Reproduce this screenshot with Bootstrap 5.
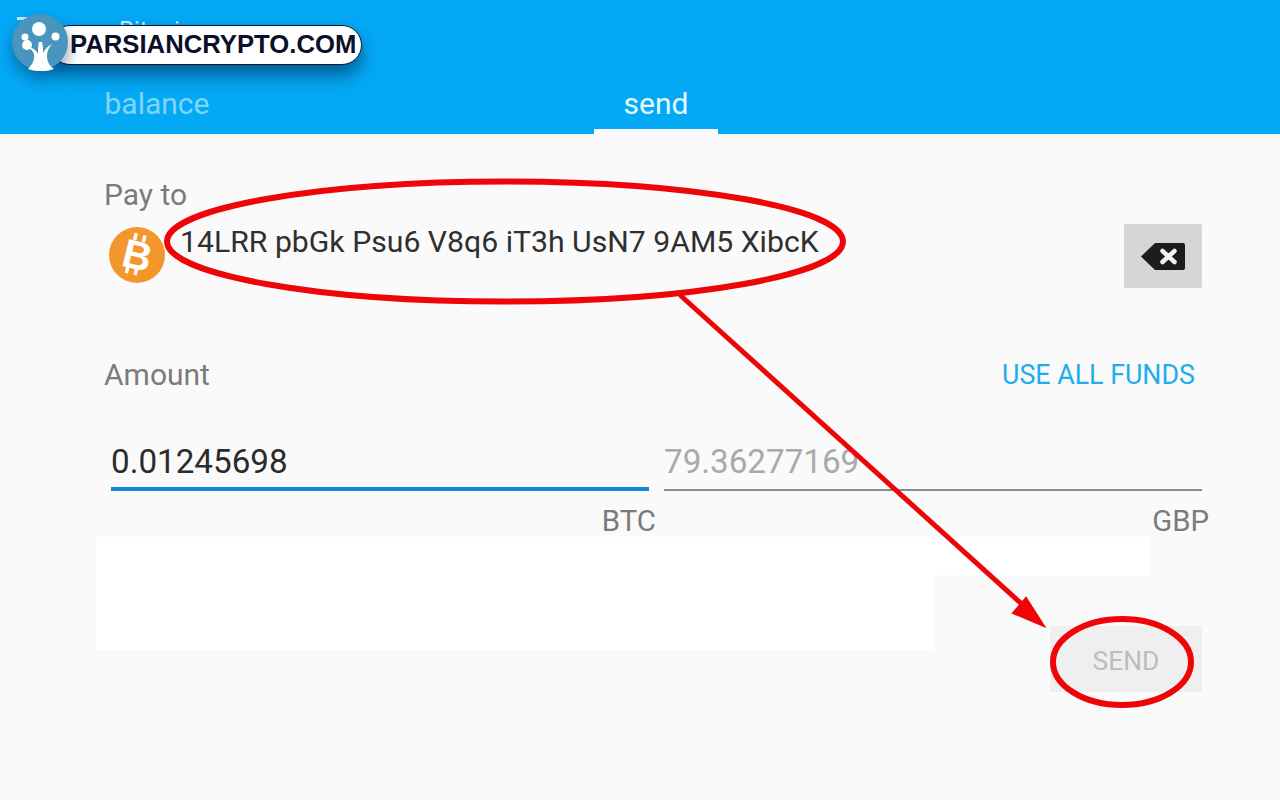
<!DOCTYPE html>
<html lang="en">
<head>
    <meta charset="UTF-8">
    <meta name="viewport" content="width=device-width, initial-scale=1.0">
    <title>Bitcoin send</title>
    <link href="https://cdn.jsdelivr.net/npm/bootstrap@5.3.0/dist/css/bootstrap.min.css" rel="stylesheet">
    <style>
        html, body { height: 100%; overflow: hidden; }
        body { background: #fafafa; font-family: Roboto, sans-serif; position: relative; color: #7b7b7b; }
        .app-head { height: 134px; background: #04a9f5; color: #fff; }
        .top-row { height: 86px; padding: 16px 0 0 17px; gap: 86px; }
        .top-title { font-size: 24px; line-height: 28px; color: #cdeefd; }
        .menu-mark { width: 16px; height: 3px; background: #cdeefd; margin-top: 1px; }
        .tab-row { height: 48px; }
        .tab-item { font-size: 30px; line-height: 36px; height: 48px; text-align: center; color: #80d4fa; width: 124px; }
        .tab-item.first { margin-left: 95px; }
        .tab-item.second { margin-left: 375px; color: #e6f7fe; border-bottom: 5px solid #fafafa; }
        .pay-box { padding: 44px 78px 0 104px; }
        .field-label { font-size: 30px; line-height: 34px; }
        .pay-row { margin-top: 12px; height: 66px; padding-left: 5px; }
        .coin-mark { width: 56px; height: 56px; margin-top: 3px; flex: none; }
        .addr-text { font-size: 30.2px; line-height: 34px; color: #2f2f2f; margin-left: 15px; margin-top: 1px; white-space: nowrap; }
        .erase-btn { width: 78px; height: 64px; background: #d6d6d6; border-radius: 2px; margin-left: auto; }
        .amount-row { margin-top: 68px; }
        .funds-link { font-size: 26.8px; line-height: 34px; color: #20ade9; margin-right: 7px; }
        .inputs-row { margin-top: 45px; padding-left: 7px; gap: 15px; }
        .num-field { height: 54px; font-size: 33.2px; line-height: 50px; }
        .num-field.active { width: 538px; color: #2b2b2b; border-bottom: 4px solid #1488d8; }
        .num-field.idle { width: 538px; color: #a9a9a9; border-bottom: 2px solid #8c8c8c; }
        .unit-row { margin-top: 13px; font-size: 29.4px; line-height: 34px; }
        .unit-a { width: 656px; text-align: right; }
        .unit-b { width: 553px; text-align: right; }
        .send-wrap { padding: 88px 78px 0 0; }
        .send-btn { width: 152px; height: 66px; background: #efefef; color: #bdbdbd; font-size: 26.4px; line-height: 70px; text-align: center; }
        .white-patch { position: absolute; background: #fff; }
        .patch-a { left: 96px; top: 537px; width: 839px; height: 113px; }
        .patch-b { left: 935px; top: 537px; width: 70px; height: 38px; }
        .patch-c { left: 1005px; top: 537px; width: 145px; height: 39px; }
        .mark-layer { position: absolute; left: 0; top: 0; width: 1280px; height: 800px; pointer-events: none; }
        .site-badge { position: absolute; left: 12px; top: 14px; width: 350px; height: 56px; }
        .badge-pill { position: absolute; left: 38px; top: 11px; width: 312px; height: 40px; background: #fff; border: 1.5px solid #10162f; border-radius: 20px; box-shadow: 0 10px 18px rgba(0, 40, 80, .6); font-family: "Liberation Sans", Arial, sans-serif; font-weight: 700; font-size: 25.7px; line-height: 37px; color: #0b0f2a; padding-left: 19px; white-space: nowrap; }
        .badge-round { position: absolute; left: -1px; top: -1px; width: 58px; height: 58px; filter: drop-shadow(0 8px 8px rgba(0, 40, 80, .45)); }
    </style>
</head>
<body>
    <!-- Header -->
    <div class="app-head">
        <div class="top-row d-flex">
            <div>
                <div class="menu-mark"></div>
            </div>
            <div class="top-title">Bitcoin</div>
        </div>
        <div class="tab-row d-flex">
            <div class="tab-item first">balance</div>
            <div class="tab-item second">send</div>
        </div>
    </div>

    <!-- Pay to -->
    <div class="pay-box">
        <div class="field-label">Pay to</div>
        <div class="pay-row d-flex align-items-start">
            <svg class="coin-mark" viewBox="0 0 56 56">
                <circle cx="28" cy="28" r="28" fill="#f3962b"/>
                <g transform="rotate(14 28 28)">
                    <text x="28.500" y="42" text-anchor="middle" font-family="Liberation Sans, sans-serif" font-weight="700" font-size="40" fill="#fff">B</text>
                    <path d="M22 7v7M31 7v7M22 41v7M31 41v7" stroke="#fff" stroke-width="3.500" fill="none"/>
                </g>
            </svg>
            <div class="addr-text">14LRR pbGk Psu6 V8q6 iT3h UsN7 9AM5 XibcK</div>
            <div class="erase-btn d-flex align-items-center justify-content-center">
                <svg width="44" height="29" viewBox="0 0 44 29">
                    <path d="M0 14.500L14 1h28a2 2 0 0 1 2 2v23a2 2 0 0 1-2 2H14z" fill="#1c1c1c"/>
                    <path d="M21.500 9l12 11M33.500 9l-12 11" stroke="#f1f1f1" stroke-width="4.500" stroke-linecap="round"/>
                </svg>
            </div>
        </div>

        <!-- Amount -->
        <div class="amount-row d-flex justify-content-between">
            <div class="field-label">Amount</div>
            <div class="funds-link">USE ALL FUNDS</div>
        </div>
        <div class="inputs-row d-flex">
            <div class="num-field active">0.01245698</div>
            <div class="num-field idle">79.36277169</div>
        </div>
    </div>
    <div class="unit-row d-flex">
        <div class="unit-a">BTC</div>
        <div class="unit-b">GBP</div>
    </div>
    <div class="send-wrap d-flex justify-content-end">
        <div class="send-btn">SEND</div>
    </div>

    <!-- Painted over parts of the screenshot -->
    <div class="white-patch patch-a"></div>
    <div class="white-patch patch-b"></div>
    <div class="white-patch patch-c"></div>

    <!-- Red annotations -->
    <svg class="mark-layer" viewBox="0 0 1280 800">
        <ellipse cx="505" cy="241.500" rx="338" ry="60" fill="none" stroke="#ee0508" stroke-width="6"/>
        <ellipse cx="1122" cy="662" rx="69" ry="43" fill="none" stroke="#ee0508" stroke-width="6"/>
        <path d="M680 295L1024 606" stroke="#ee0508" stroke-width="5"/>
        <path d="M1044 626L1013 613L1026 598Z" fill="#ee0508" stroke="#ee0508" stroke-width="2"/>
    </svg>

    <!-- Site badge -->
    <div class="site-badge">
        <div class="badge-pill">PARSIANCRYPTO.COM</div>
        <svg class="badge-round" viewBox="0 0 58 58">
            <circle cx="29" cy="29" r="28" fill="#4a95bd"/>
            <path d="M17 56c4-4 7-9 6-15-1-3-4-6-7-7 5 0 9 3 11 7 0-5 0-9 1-12h3c1 3 1 7 1 11 2-4 5-7 9-9-3 3-5 7-5 12 0 6 3 10 7 13-8 3-18 3-26 0z" fill="#fff"/>
            <circle cx="28" cy="16" r="7" fill="#fff"/>
            <circle cx="44.500" cy="23.500" r="4" fill="#fff"/>
            <circle cx="16" cy="32" r="5" fill="#fff"/>
            <circle cx="14" cy="24" r="3.500" fill="#fff"/>
        </svg>
    </div>
</body>
</html>
